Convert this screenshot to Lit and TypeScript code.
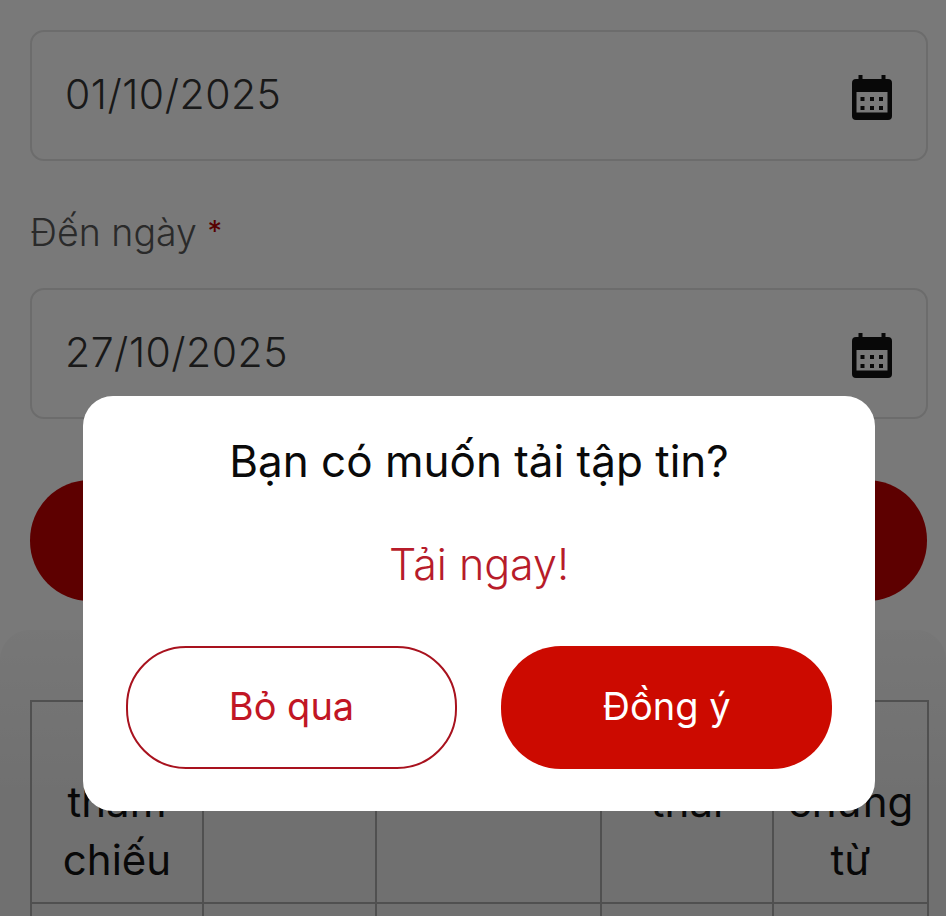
import { LitElement, html, css } from "lit";
import { customElement } from "lit/decorators.js";

const cal = html`<svg class="cal" viewBox="0 0 40 45" width="40" height="45">
  <path fill="#101010" fill-rule="evenodd" d="M6.500 0h4v4h19V0h4v4H36a4 4 0 0 1 4 4v33a4 4 0 0 1-4 4H4a4 4 0 0 1-4-4V8a4 4 0 0 1 4-4h2.500zM4.500 17v20.500h31V17z"/>
  <g fill="#101010">
    <rect x="8.500" y="22" width="4" height="4"/><rect x="18" y="22" width="4" height="4"/><rect x="27" y="22" width="4" height="4"/>
    <rect x="8.500" y="31" width="4" height="4"/><rect x="18" y="31" width="4" height="4"/><rect x="27" y="31" width="4" height="4"/>
  </g>
</svg>`;

@customElement("app-root")
export class AppRoot extends LitElement {
  static styles = css`
    :host { display: block; position: relative; width: 946px; height: 916px; overflow: hidden;
      font-family: "Inter", "Noto Sans", sans-serif; background: #f2f2f2; color: #111; }
    .form { display: flex; flex-direction: column; padding: 30px 18px 0 30px; height: 630px; box-sizing: border-box; }
    .field { height: 131px; box-sizing: border-box; border: 2px solid #d8d8d8; border-radius: 14px;
      display: flex; align-items: center; justify-content: space-between; padding: 0 34px 0 33px;
      font-size: 41px; font-weight: 300; color: #333; }
    .field span { margin-bottom: 4px; letter-spacing: 0.5px; }
    .cal { display: block; margin-top: 4px; }
    .label { margin: 50px 0 33px; height: 44px; line-height: 44px; font-size: 37.500px; font-weight: 300; color: #555; }
    .label b { color: #b00000; font-weight: 400; font-size: 29px; position: relative; top: -5px; }
    .cta { margin: 61px 1px 0 0; height: 121px; border-radius: 60px; background: #bb0000; }
    .sheet { background: linear-gradient(#eeeeee, #e0e0e0 60%); height: 216px; border-radius: 30px 30px 0 0; padding: 70px 18px 0 30px; }
    table { border-collapse: collapse; table-layout: fixed; width: 898px; font-size: 42px; line-height: 58px; color: #111; }
    th, td { border: 2px solid #a0a0a0; font-weight: 400; vertical-align: top; text-align: center; padding: 13px 10px 13px; }
    .empty td { height: 60px; padding: 0; }
    .shade { position: absolute; inset: 0; background: rgba(0, 0, 0, 0.5); }
    .modal { position: absolute; left: 83px; top: 396px; width: 792px; height: 415px; background: #fff; border-radius: 30px;
      display: flex; flex-direction: column; align-items: center; }
    .title { margin-top: 35px; height: 60px; line-height: 60px; font-size: 44px; font-weight: 400; color: #0a0a0a; }
    .msg { margin-top: 49px; height: 48px; line-height: 48px; font-size: 43px; font-weight: 300; color: #b71c2a; }
    .btns { margin-top: 58px; display: flex; gap: 44px; }
    .btn { width: 331px; height: 123px; box-sizing: border-box; border-radius: 60px; display: flex; align-items: center; justify-content: center; font-size: 38px; font-weight: 400; padding-bottom: 3px; }
    .ghost { background: #fff; border: 2px solid #a8121e; color: #c11624; }
    .solid { background: #cc0a00; color: #fff; }
  `;

  render() {
    return html`
      <div class="form">
        <div class="field"><span>01/10/2025</span>${cal}</div>
        <div class="label">Đến ngày <b>*</b></div>
        <div class="field"><span>27/10/2025</span>${cal}</div>
        <div class="cta"></div>
      </div>
      <div class="sheet">
        <table>
          <colgroup><col style="width:172px" /><col style="width:173px" /><col style="width:225px" /><col style="width:172px" /><col style="width:155px" /></colgroup>
          <tr><th>Số tham chiếu</th><th></th><th></th><th>Trạng thái</th><th>Số chứng từ</th></tr>
          <tr class="empty"><td></td><td></td><td></td><td></td><td></td></tr>
        </table>
      </div>
      <div class="shade"></div>
      <div class="modal">
        <div class="title">Bạn có muốn tải tập tin?</div>
        <div class="msg">Tải ngay!</div>
        <div class="btns">
          <div class="btn ghost">Bỏ qua</div>
          <div class="btn solid">Đồng ý</div>
        </div>
      </div>
    `;
  }
}
